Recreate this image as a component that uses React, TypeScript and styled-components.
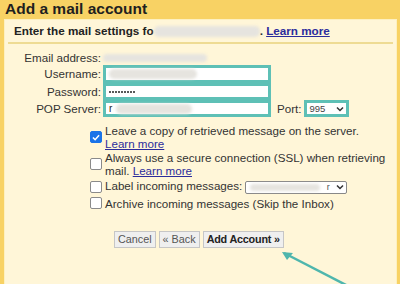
import { FC } from "react";
import styled, { createGlobalStyle } from "styled-components";

const GlobalStyle = createGlobalStyle`
  html, body {
    margin: 0;
    padding: 0;
    width: 400px;
    height: 284px;
    overflow: hidden;
    background: #f8d264;
    font-family: "Liberation Sans", Arial, sans-serif;
  }
`;

const Page = styled.div`
  position: relative;
  width: 400px;
  height: 284px;
  display: flex;
  flex-direction: column;
  background: #f8d264;
`;

const Title = styled.h1`
  margin: 0;
  padding: 0 0 0 5px;
  height: 19px;
  font-size: 15.5px;
  line-height: 17px;
  font-weight: bold;
  color: #1f1f1f;
`;

const Panel = styled.div`
  flex: 1;
  margin: 0 3px 0 4px;
  background: #fff6d8;
  border: 1px solid #fdf0c0;
  border-bottom: none;
  display: flex;
  flex-direction: column;
`;

const PanelHeader = styled.div`
  margin: 0 3px;
  padding: 4px 4px 4px 6px;
  height: 14px;
  border-bottom: 2px solid #eedb93;
  font-size: 11.7px;
  line-height: 14px;
  font-weight: bold;
  color: #222;
  display: flex;
  align-items: center;
  white-space: nowrap;
`;

const Blur = styled.span<{ $w: number; $h?: number }>`
  display: inline-block;
  width: ${(p) => p.$w}px;
  height: ${(p) => p.$h ?? 9}px;
  background: #e6e4df;
  border-radius: 5px;
  filter: blur(1.5px);
  vertical-align: middle;
`;

const Link = styled.a`
  color: #2c2c9c;
  text-decoration: underline;
  cursor: pointer;
`;

const Form = styled.div`
  display: grid;
  grid-template-columns: 92px auto;
  column-gap: 2px;
  padding: 6px 0 0 4px;
  font-size: 11.6px;
  color: #333;
`;

const Label = styled.div<{ $h: number }>`
  text-align: right;
  height: ${(p) => p.$h}px;
  line-height: ${(p) => p.$h}px;
  white-space: nowrap;
`;

const Field = styled.div<{ $h: number }>`
  height: ${(p) => p.$h}px;
  display: flex;
  align-items: center;
`;

const TextBox = styled.div<{ $h: number }>`
  width: 159px;
  height: ${(p) => p.$h - 6}px;
  background: #fff;
  border: 3px solid #5ec0b6;
  display: flex;
  align-items: center;
  padding-left: 3px;
  gap: 4px;
  font-size: 10px;
  color: #222;
  box-sizing: content-box;
`;

const Dots = styled.span`
  display: flex;
  gap: 1px;
`;

const Dot = styled.span`
  width: 2px;
  height: 2px;
  border-radius: 1px;
  background: #222;
`;

const PortLabel = styled.span`
  margin: 0 3px 0 6px;
`;

const PortSelect = styled.div`
  width: 35px;
  height: 11px;
  border: 3px solid #5ec0b6;
  background: #fff;
  display: flex;
  align-items: center;
  justify-content: space-between;
  padding: 0 2px;
  font-size: 9.5px;
  color: #444;
`;

const Options = styled.div`
  display: flex;
  flex-direction: column;
  padding: 7px 0 0 85px;
  font-size: 11.6px;
  line-height: 13.3px;
  color: #333;
  white-space: nowrap;
`;

const OptionRow = styled.div<{ $h?: number }>`
  display: flex;
  align-items: center;
  gap: 3px;
  height: ${(p) => (p.$h ? `${p.$h}px` : "auto")};
`;

const Check = styled.span<{ $on?: boolean }>`
  flex: none;
  width: 10px;
  height: 10px;
  border-radius: 2px;
  border: 1px solid ${(p) => (p.$on ? "#1a73e8" : "#8a8a8a")};
  background: ${(p) => (p.$on ? "#1a73e8" : "#fff")};
  display: flex;
  align-items: center;
  justify-content: center;
`;

const LabelSelect = styled.div`
  width: 94px;
  height: 11px;
  border: 1px solid #888;
  border-radius: 2px;
  background: #fff;
  display: inline-flex;
  align-items: center;
  justify-content: space-between;
  padding: 0 2px 0 4px;
  margin-left: 3px;
  font-size: 9px;
  color: #555;
  vertical-align: middle;
`;

const Buttons = styled.div`
  display: flex;
  gap: 3px;
  padding: 20px 0 0 109px;
`;

const Button = styled.button<{ $primary?: boolean }>`
  height: 17px;
  padding: 0 3px;
  background: #efefef;
  border: 1px solid #c6c6c6;
  font-family: "Liberation Sans", Arial, sans-serif;
  font-size: 10.8px;
  font-weight: ${(p) => (p.$primary ? "bold" : "normal")};
  color: ${(p) => (p.$primary ? "#222" : "#555")};
  line-height: 15px;
  letter-spacing: ${(p) => (p.$primary ? "-0.2px" : "0")};
`;

const Arrow = styled.svg`
  position: absolute;
  left: 276px;
  top: 246px;
`;

const Chevron: FC = () => (
  <svg width="8" height="6" viewBox="0 0 8 6">
    <path d="M1 1.5 L4 4.5 L7 1.5" fill="none" stroke="#333" strokeWidth="1.5" />
  </svg>
);

const App: FC = () => {
  return (
    <Page>
      <GlobalStyle />
      <Title>Add a mail account</Title>
      <Panel>
        <PanelHeader>
          Enter the mail settings fo
          <Blur $w={106} $h={11} />
          .&nbsp;<Link>Learn more</Link>
        </PanelHeader>
        <Form>
          <Label $h={15}>Email address:</Label>
          <Field $h={15}>
            <Blur $w={104} $h={8} />
          </Field>
          <Label $h={18}>Username:</Label>
          <Field $h={18}>
            <TextBox $h={18}>
              <Blur $w={88} $h={10} />
            </TextBox>
          </Field>
          <Label $h={17}>Password:</Label>
          <Field $h={17}>
            <TextBox $h={17}>
              <Dots>
                {Array.from({ length: 9 }).map((_, i) => (
                  <Dot key={i} />
                ))}
              </Dots>
            </TextBox>
          </Field>
          <Label $h={17}>POP Server:</Label>
          <Field $h={17}>
            <TextBox $h={17}>
              r
              <Blur $w={76} $h={10} />
            </TextBox>
            <PortLabel>Port:</PortLabel>
            <PortSelect>
              995
              <Chevron />
            </PortSelect>
          </Field>
        </Form>
        <Options>
          <OptionRow>
            <Check $on>
              <svg width="8" height="7" viewBox="0 0 9 8">
                <path d="M1 4 L3.5 6.5 L8 1.5" fill="none" stroke="#fff" strokeWidth="1.8" />
              </svg>
            </Check>
            <div>
              Leave a copy of retrieved message on the server.
              <br />
              <Link>Learn more</Link>
            </div>
          </OptionRow>
          <OptionRow>
            <Check />
            <div>
              Always use a secure connection (SSL) when retrieving
              <br />
              mail. <Link>Learn more</Link>
            </div>
          </OptionRow>
          <OptionRow $h={17} style={{ marginTop: 1 }}>
            <Check />
            <div>
              Label incoming messages:
              <LabelSelect>
                <Blur $w={70} $h={7} />
                <span>r</span>
                <Chevron />
              </LabelSelect>
            </div>
          </OptionRow>
          <OptionRow $h={16}>
            <Check />
            <div>Archive incoming messages (Skip the Inbox)</div>
          </OptionRow>
        </Options>
        <Buttons>
          <Button>Cancel</Button>
          <Button>« Back</Button>
          <Button $primary>Add Account »</Button>
        </Buttons>
      </Panel>
      <Arrow width="80" height="40" viewBox="0 0 80 40">
        <path d="M8 7 L72 40" stroke="#4fb6ad" strokeWidth="2.5" fill="none" />
        <path d="M6 6 L17 7 L11 14 Z" fill="#4fb6ad" />
      </Arrow>
    </Page>
  );
};

export default App;
